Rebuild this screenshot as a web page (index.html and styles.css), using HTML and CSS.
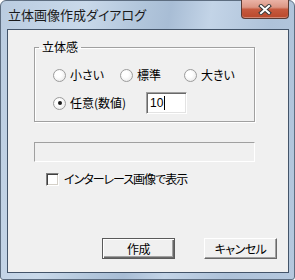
FILE: index.html
```html
<!DOCTYPE html>
<html lang="ja">
<head>
    <meta charset="UTF-8">
    <title>立体画像作成ダイアログ</title>
    <link rel="stylesheet" href="styles.css">
</head>
<body>
    <!-- ダイアログ枠 -->
    <div class="window">
        <div class="titlebar">
            <span class="title">立体画像作成ダイアログ</span>
            <button class="close-btn" type="button">
                <svg width="14" height="11" viewBox="0 0 14 11">
                    <path d="M3 2 L11 9 M11 2 L3 9" stroke="#3a3a3a" stroke-width="4" stroke-linecap="square"/>
                    <path d="M3 2 L11 9 M11 2 L3 9" stroke="#ffffff" stroke-width="2" stroke-linecap="square"/>
                </svg>
            </button>
        </div>

        <div class="client">
            <!-- 立体感グループ -->
            <fieldset class="group">
                <legend>立体感</legend>
                <div class="group-body">
                    <div class="radio-row">
                        <label class="option"><span class="radio"></span>小さい</label>
                        <label class="option"><span class="radio"></span>標準</label>
                        <label class="option"><span class="radio"></span>大きい</label>
                    </div>
                    <div class="radio-row custom">
                        <label class="option"><span class="radio checked"></span>任意(数値)</label>
                        <div class="number-box">10<span class="caret"></span></div>
                    </div>
                </div>
            </fieldset>

            <div class="progress"></div>

            <label class="check-row"><span class="checkbox"></span>インターレース画像で表示</label>

            <div class="buttons">
                <button class="btn default" type="button">作成</button>
                <button class="btn" type="button">キャンセル</button>
            </div>
        </div>
    </div>
</body>
</html>
```

FILE: styles.css
```css
* {
    margin: 0;
    padding: 0;
    box-sizing: border-box;
}

body {
    background-color: #ffffff;
    font-family: "Noto Sans CJK JP", sans-serif;
    font-size: 12px;
    font-feature-settings: "palt";
    color: #000;
}

.window {
    width: 295px;
    height: 280px;
    display: flex;
    flex-direction: column;
    border: 1px solid #5d6d80;
    border-radius: 6px 6px 3px 3px;
    background: linear-gradient(100deg, #bacce0 0%, #c9d9ea 25%, #b3c7dc 40%, #a8bdd5 50%, #c3d4e7 62%, #aec2d9 80%, #b5c8de 100%);
}

.titlebar {
    height: 28px;
    display: flex;
    justify-content: space-between;
    align-items: flex-start;
    padding-left: 7px;
}

.title {
    margin-top: 6px;
    font-size: 13px;
    line-height: 16px;
    color: #1a1a1a;
}

.close-btn {
    width: 48px;
    height: 19px;
    margin-top: -1px;
    margin-right: 5px;
    display: flex;
    justify-content: center;
    align-items: center;
    border: 1px solid #5a3b34;
    border-top: none;
    border-radius: 0 0 4px 4px;
    background: linear-gradient(#eab3a6 0%, #dc9684 40%, #c65a3f 52%, #b9482b 100%);
    box-shadow: inset 0 -1px 0 rgba(255,255,255,0.35);
}

.client {
    width: 282px;
    height: 244px;
    margin-left: 6px;
    display: flex;
    flex-direction: column;
    border: 1px solid #435469;
    background-color: #f0f0f0;
}

/* グループボックス */
.group {
    width: 221px;
    margin: 10px 0 0 26px;
    padding: 0;
    border: 1px solid #a0a0a0;
    box-shadow: 1px 1px 0 #fff, inset 1px 1px 0 #fff;
}

.group legend {
    margin-left: 4px;
    padding: 0 3px;
    line-height: 14px;
    font-size: 12px;
}

.group-body {
    padding: 11px 0 7px 18px;
}

.radio-row {
    display: grid;
    grid-template-columns: 67px 64px auto;
    height: 20px;
    align-items: center;
}

.radio-row.custom {
    display: flex;
    height: 22px;
    margin-top: 7px;
}

.radio-row.custom .option {
    width: 93px;
}

.option {
    display: flex;
    align-items: center;
    gap: 4px;
    line-height: 14px;
}

.radio {
    width: 13px;
    height: 13px;
    border: 1px solid #9c9c9c;
    border-radius: 50%;
    background: radial-gradient(circle at 40% 40%, #ffffff 30%, #e2e2e2 100%);
    display: flex;
    justify-content: center;
    align-items: center;
}

.radio.checked::after {
    content: "";
    width: 4px;
    height: 4px;
    border-radius: 50%;
    background-color: #1a1a1a;
}

.number-box {
    width: 41px;
    height: 22px;
    display: flex;
    align-items: center;
    padding-left: 3px;
    background-color: #fff;
    border: 1px solid;
    border-color: #a0a0a0 #ffffff #ffffff #a0a0a0;
    box-shadow: inset 1px 1px 0 #696969, inset -1px -1px 0 #e3e3e3;
    font-family: "Liberation Sans", sans-serif;
    font-size: 12px;
}

.caret {
    width: 1px;
    height: 14px;
    margin-left: 1px;
    background-color: #000;
}

.progress {
    width: 221px;
    height: 20px;
    margin: 20px 0 0 26px;
    border: 1px solid;
    border-color: #a0a0a0 #ffffff #ffffff #a0a0a0;
}

.check-row {
    display: flex;
    align-items: center;
    gap: 5px;
    height: 16px;
    margin: 9px 0 0 38px;
    line-height: 14px;
    letter-spacing: -1px;
}

.checkbox {
    width: 13px;
    height: 13px;
    background-color: #fff;
    border: 1px solid;
    border-color: #808080 #ffffff #ffffff #808080;
    box-shadow: inset 1px 1px 0 #404040, inset -1px -1px 0 #d4d0c8;
}

.buttons {
    display: flex;
    justify-content: flex-end;
    gap: 29px;
    margin-top: auto;
    margin-bottom: 13px;
    padding-right: 11px;
}

.btn {
    width: 73px;
    height: 21px;
    font-family: inherit;
    font-size: 12px;
    font-feature-settings: "palt";
    letter-spacing: -0.5px;
    background-color: #f0f0f0;
    border: 1px solid;
    border-color: #ffffff #696969 #696969 #ffffff;
    box-shadow: inset -1px -1px 0 #a0a0a0;
}

.btn.default {
    border-color: #5a5a5a;
    box-shadow: inset 1px 1px 0 #fff, inset -1px -1px 0 #696969, inset -2px -2px 0 #a0a0a0;
}
```
